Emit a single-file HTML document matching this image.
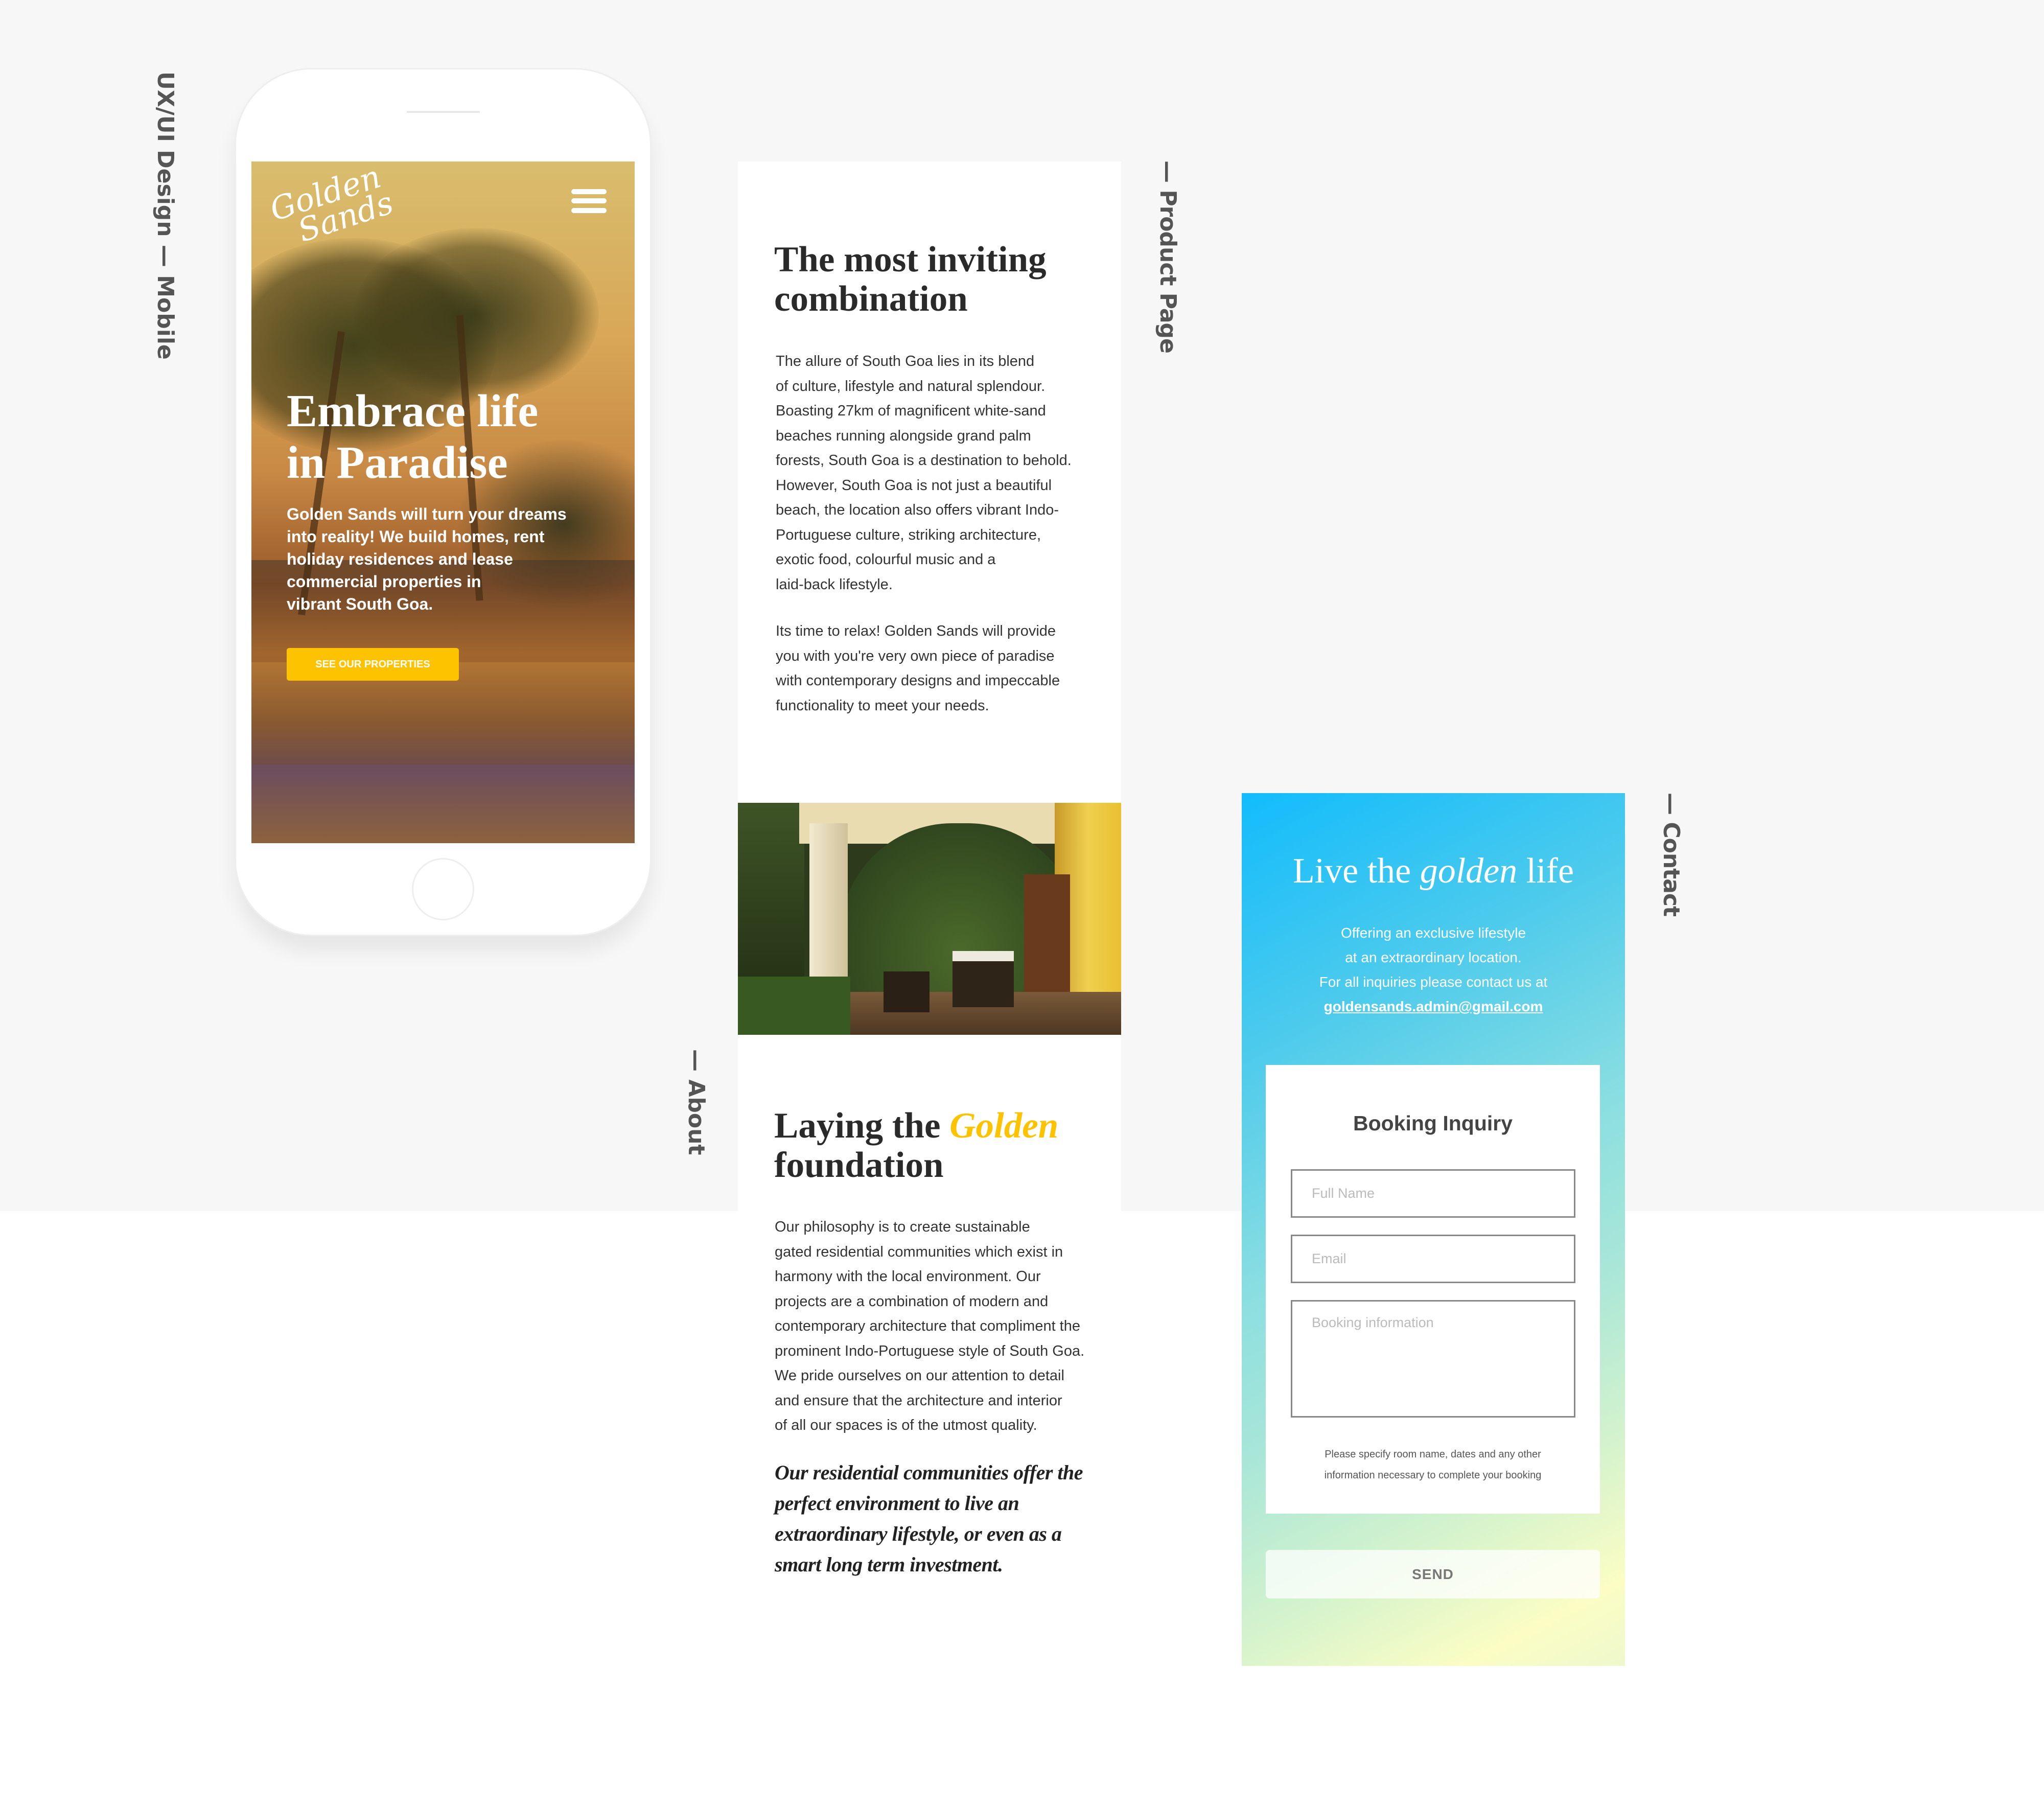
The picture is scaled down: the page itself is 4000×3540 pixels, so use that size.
<!DOCTYPE html>
<html><head><meta charset="utf-8"><style>
*{margin:0;padding:0;box-sizing:border-box}
body{width:4000px;height:3540px;background:#fff;position:relative;overflow:hidden;font-family:"Liberation Sans",sans-serif}
.abs{position:absolute}
.vl{position:absolute;writing-mode:vertical-rl;font-family:"DejaVu Sans","Liberation Sans",sans-serif;font-size:44px;color:#555;white-space:nowrap;font-weight:bold}
.serif{font-family:"Liberation Serif",serif}
.p{font-size:29px;line-height:48.5px;color:#333}
</style></head><body>
<div class="abs" style="left:0;top:0;width:4000px;height:2370px;background:#f7f7f7"></div>

<div class="vl" style="left:298px;top:140px">UX/UI Design — Mobile</div>
<div class="vl" style="left:2260px;top:314px;letter-spacing:-1px">— Product Page</div>
<div class="vl" style="left:1337px;top:2053px">— About</div>
<div class="vl" style="left:3245px;top:1551px;letter-spacing:-1px">— Contact</div>

<!-- phone -->
<div class="abs" style="left:459px;top:133px;width:816px;height:1699px;background:#fff;border-radius:150px;border:3px solid #eee;box-shadow:0 30px 40px rgba(0,0,0,0.07)"></div>
<div class="abs" style="left:796px;top:217px;width:143px;height:4px;background:#e8e8e8"></div>
<div class="abs" style="left:806px;top:1679px;width:122px;height:122px;border-radius:50%;border:3px solid #eee"></div>
<div class="abs" style="left:492px;top:316px;width:750px;height:1334px;overflow:hidden;background:linear-gradient(180deg,#d9bd6e 0%,#d8a858 25%,#c98a45 45%,#9a5a2a 62%,#b87a35 72%,#8a5a30 82%,#6a4a50 90%,#8a6040 100%)">
 <div class="abs" style="left:-80px;top:150px;width:560px;height:420px;border-radius:50%;background:radial-gradient(ellipse,rgba(50,55,20,0.9),rgba(60,55,20,0.6) 55%,rgba(0,0,0,0) 72%)"></div>
 <div class="abs" style="left:200px;top:130px;width:480px;height:340px;border-radius:50%;background:radial-gradient(ellipse,rgba(45,50,20,0.85),rgba(60,55,20,0.5) 55%,rgba(0,0,0,0) 72%)"></div>
 <div class="abs" style="left:400px;top:540px;width:420px;height:340px;border-radius:50%;background:radial-gradient(ellipse,rgba(40,45,25,0.8),rgba(0,0,0,0) 70%)"></div>
 <div class="abs" style="left:0;top:780px;width:750px;height:200px;background:linear-gradient(180deg,rgba(60,50,40,0.5),rgba(120,60,30,0.3))"></div>
 <div class="abs" style="left:130px;top:330px;width:14px;height:560px;background:rgba(70,45,20,0.7);transform:rotate(8deg)"></div>
 <div class="abs" style="left:420px;top:300px;width:14px;height:560px;background:rgba(70,45,20,0.7);transform:rotate(-4deg)"></div>
 <div class="abs" style="left:0;top:1180px;width:750px;height:154px;background:linear-gradient(180deg,rgba(110,80,110,0.5),rgba(140,100,60,0.6))"></div>
 <div class="abs" style="left:30px;color:#fff;font-family:'DejaVu Serif',cursive;font-style:italic;font-size:62px;line-height:56px;transform:rotate(-18deg);transform-origin:left top;top:70px">Golden<br>&nbsp;&nbsp;Sands</div>
 <div class="abs" style="left:626px;top:54px;width:69px;height:10px;background:#fff;border-radius:5px"></div>
 <div class="abs" style="left:626px;top:72px;width:69px;height:10px;background:#fff;border-radius:5px"></div>
 <div class="abs" style="left:626px;top:91px;width:69px;height:10px;background:#fff;border-radius:5px"></div>
 <div class="abs serif" style="left:69px;top:438px;color:#fff;font-size:90px;line-height:101px;font-weight:bold">Embrace life<br>in Paradise</div>
 <div class="abs" style="left:69px;top:668px;color:#fff;font-size:32px;line-height:44px;font-weight:bold;white-space:nowrap">Golden Sands will turn your dreams<br>into reality! We build homes, rent<br>holiday residences and lease<br>commercial properties in<br>vibrant South Goa.</div>
 <div class="abs" style="left:69px;top:952px;width:337px;height:64px;background:#fdc300;border-radius:5px;color:#fff;font-size:20px;font-weight:bold;text-align:center;line-height:64px">SEE OUR PROPERTIES</div>
</div>

<!-- middle column -->
<div class="abs" style="left:1444px;top:316px;width:750px;height:3000px;background:#fff"></div>
<div class="abs serif" style="left:1515px;top:470px;font-size:71px;line-height:77px;color:#2a2a2a;font-weight:bold">The most inviting<br>combination</div>
<div class="abs p" style="left:1518px;top:683px">The allure of South Goa lies in its blend<br>of culture, lifestyle and natural splendour.<br>Boasting 27km of magnificent white-sand<br>beaches running alongside grand palm<br>forests, South Goa is a destination to behold.<br>However, South Goa is not just a beautiful<br>beach, the location also offers vibrant Indo-<br>Portuguese culture, striking architecture,<br>exotic food, colourful music and a<br>laid-back lifestyle.</div>
<div class="abs p" style="left:1518px;top:1211px">Its time to relax! Golden Sands will provide<br>you with you're very own piece of paradise<br>with contemporary designs and impeccable<br>functionality to meet your needs.</div>

<div class="abs" style="left:1444px;top:1571px;width:750px;height:454px;overflow:hidden;background:#2d3a1c">
 <div class="abs" style="left:0;top:0;width:130px;height:454px;background:linear-gradient(180deg,#3e5426,#1f2a12)"></div>
 <div class="abs" style="left:120px;top:0;width:630px;height:80px;background:#e8dcb0"></div>
 <div class="abs" style="left:200px;top:40px;width:470px;height:420px;border-radius:220px 220px 0 0;background:radial-gradient(ellipse at 50% 60%,#4b6a2a,#26381a)"></div>
 <div class="abs" style="left:140px;top:40px;width:75px;height:370px;background:linear-gradient(90deg,#f2ead0,#cfc19a)"></div>
 <div class="abs" style="left:620px;top:0;width:130px;height:454px;background:linear-gradient(90deg,#c89a2a,#f0d050,#e8c030)"></div>
 <div class="abs" style="left:560px;top:140px;width:90px;height:260px;background:#6a3a1c"></div>
 <div class="abs" style="left:150px;top:370px;width:600px;height:90px;background:linear-gradient(180deg,#7a5a3a,#4a3520)"></div>
 <div class="abs" style="left:285px;top:330px;width:90px;height:80px;background:#2a2015"></div>
 <div class="abs" style="left:420px;top:290px;width:120px;height:110px;background:#2e2418;border-top:20px solid #efeadf"></div>
 <div class="abs" style="left:0;top:340px;width:220px;height:114px;background:#385a20"></div>
</div>

<div class="abs serif" style="left:1515px;top:2165px;font-size:71px;line-height:77px;color:#2a2a2a;font-weight:bold">Laying the <i style="color:#fdc300">Golden</i><br>foundation</div>
<div class="abs p" style="left:1516px;top:2377px">Our philosophy is to create sustainable<br>gated residential communities which exist in<br>harmony with the local environment. Our<br>projects are a combination of modern and<br>contemporary architecture that compliment the<br>prominent Indo-Portuguese style of South Goa.<br>We pride ourselves on our attention to detail<br>and ensure that the architecture and interior<br>of all our spaces is of the utmost quality.</div>
<div class="abs serif" style="left:1516px;top:2852px;font-size:40px;line-height:60px;color:#222;font-style:italic;font-weight:bold;letter-spacing:-0.5px">Our residential communities offer the<br>perfect environment to live an<br>extraordinary lifestyle, or even as a<br>smart long term investment.</div>

<!-- contact -->
<div class="abs" style="left:2430px;top:1552px;width:750px;height:1708px;background:linear-gradient(152deg,#12bcfc 0%,#4ecbec 25%,#8ddfe0 48%,#a8e6d8 62%,#d8f4cc 80%,#fbfdc4 92%,#eef8cc 100%)"></div>
<div class="abs serif" style="left:2430px;top:1660px;width:750px;text-align:center;color:#fff;font-size:70px;line-height:90px">Live the <i>golden</i> life</div>
<div class="abs" style="left:2430px;top:1802px;width:750px;text-align:center;color:#fff;font-size:28px;line-height:48px">Offering an exclusive lifestyle<br>at an extraordinary location.<br>For all inquiries please contact us at<br><b style="text-decoration:underline">goldensands.admin@gmail.com</b></div>
<div class="abs" style="left:2477px;top:2084px;width:654px;height:878px;background:#fff"></div>
<div class="abs" style="left:2477px;top:2175px;width:654px;text-align:center;font-size:41px;font-weight:bold;color:#444">Booking Inquiry</div>
<div class="abs" style="left:2526px;top:2288px;width:557px;height:95px;border:3px solid #888;font-size:27px;color:#bbb;padding-left:38px;line-height:89px">Full Name</div>
<div class="abs" style="left:2526px;top:2416px;width:557px;height:95px;border:3px solid #888;font-size:27px;color:#bbb;padding-left:38px;line-height:89px">Email</div>
<div class="abs" style="left:2526px;top:2544px;width:557px;height:230px;border:3px solid #888;font-size:27px;color:#bbb;padding-left:38px;padding-top:26px">Booking information</div>
<div class="abs" style="left:2477px;top:2826px;width:654px;text-align:center;font-size:20px;line-height:41px;color:#555">Please specify room name, dates and any other<br>information necessary to complete your booking</div>
<div class="abs" style="left:2477px;top:3033px;width:654px;height:95px;background:rgba(255,255,255,0.75);border-radius:8px;text-align:center;line-height:95px;font-size:28px;font-weight:bold;color:#777;letter-spacing:1px">SEND</div>
</body></html>
